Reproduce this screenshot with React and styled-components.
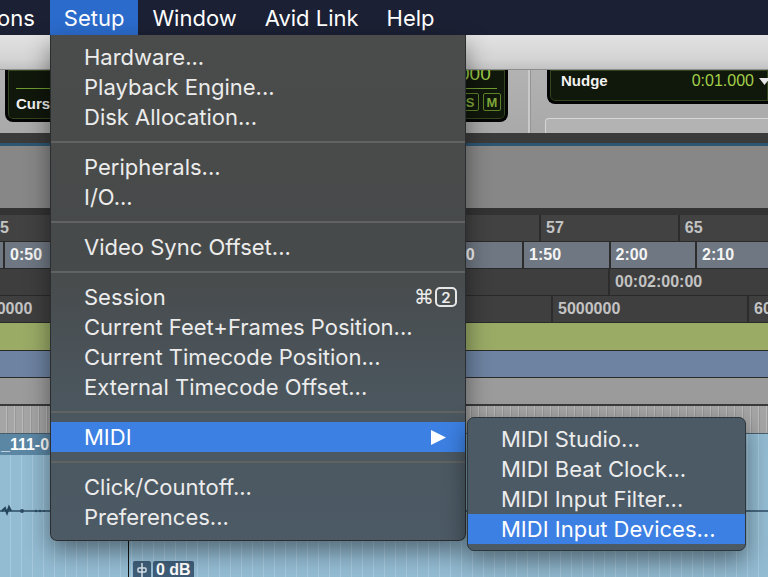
import styled, { createGlobalStyle } from "styled-components";

const GlobalStyle = createGlobalStyle`
  html, body {
    margin: 0;
    padding: 0;
    background: #94bcd3;
  }
  body {
    width: 768px;
    height: 577px;
    overflow: hidden;
    font-family: Inter, "DejaVu Sans", sans-serif;
  }
`;

const Screen = styled.div`
  position: relative;
  width: 768px;
  height: 577px;
  overflow: hidden;
  display: flex;
  flex-direction: column;
`;

/* ---------- system menu bar ---------- */

const MenuBar = styled.div`
  height: 35px;
  flex: none;
  display: flex;
  background: #1b2034;
  color: #fff;
  font-size: 22px;
`;

const BarItem = styled.div`
  display: flex;
  align-items: center;
  padding: ${(p) => (p.$cut ? "0 15px 0 0" : "0 14px")};
  margin-left: ${(p) => (p.$cut ? "-3px" : "0")};
  background: ${(p) => (p.$active ? "#2b6bcc" : "transparent")};
`;

/* ---------- pro tools window behind ---------- */

const Toolbar = styled.div`
  height: 35px;
  flex: none;
  box-sizing: border-box;
  background: linear-gradient(#e2e2e2, #d4d4d4 70%, #c2c2c2);
  border-bottom: 1px solid #8c8c8c;
`;

const CounterArea = styled.div`
  height: 63px;
  flex: none;
  display: flex;
  align-items: flex-start;
  background: linear-gradient(#b2b2b2, #a9a9a9);
  font-family: "Liberation Sans", Arial, sans-serif;
`;

const Lcd = styled.div`
  box-sizing: border-box;
  flex: none;
  height: ${(p) => p.$h}px;
  margin-left: ${(p) => p.$ml}px;
  width: ${(p) => (p.$w ? `${p.$w}px` : "auto")};
  background: #10170b;
  border: 3px solid #050505;
  border-top: none;
  border-right: ${(p) => (p.$open ? "none" : "3px solid #050505")};
  border-radius: ${(p) => (p.$open ? "0 0 0 8px" : "0 0 8px 8px")};
  box-shadow: inset 0 0 0 1px #34461f;
  overflow: hidden;
  display: flex;
  justify-content: space-between;
  align-items: ${(p) => (p.$open ? "flex-start" : "stretch")};
  padding: ${(p) => (p.$open ? "2px 0 0 11px" : "0 8px")};
`;

const LcdBlock = styled.div`
  width: ${(p) => p.$w}px;
  display: flex;
  flex-direction: column;
  align-items: ${(p) => (p.$end ? "flex-end" : "flex-start")};
`;

const LcdDigits = styled.div`
  height: 12px;
  margin-top: -2px;
  color: #9cc848;
  font-size: 19px;
  line-height: 12px;
  overflow: hidden;
  align-self: flex-start;
`;

const LcdRule = styled.div`
  height: 1px;
  width: 34px;
  margin-top: ${(p) => p.$mt}px;
  background: #6f9a2e;
`;

const LcdLabel = styled.div`
  margin-top: ${(p) => p.$mt ?? 6}px;
  color: #f2f2f2;
  font-size: 15px;
  font-weight: 700;
`;

const LcdButtons = styled.div`
  display: flex;
  gap: 4px;
  margin-top: 4px;
  margin-right: -4px;
`;

const LcdButton = styled.div`
  width: 18px;
  height: 18px;
  box-sizing: border-box;
  border: 1.5px solid #5e8228;
  border-radius: 2px;
  color: #7fa63a;
  font-size: 13px;
  font-weight: 700;
  display: flex;
  align-items: center;
  justify-content: center;
`;

const PanelDivider = styled.div`
  width: 2px;
  height: 63px;
  margin-left: 20px;
  background: #c9c9c9;
  box-shadow: 1px 0 0 #959595;
`;

const NudgeColumn = styled.div`
  flex: 1;
  margin-left: 17px;
  display: flex;
  flex-direction: column;
`;

const NudgeValue = styled.div`
  display: flex;
  align-items: center;
  gap: 5px;
  color: #a3cf4a;
  font-size: 16px;
  margin-right: -2px;
`;

const RaisedPanel = styled.div`
  height: 15px;
  margin: 14px 0 0 -2px;
  box-sizing: border-box;
  background: #b3b3b3;
  border: 1px solid #d6d6d6;
  border-right: none;
  border-bottom: none;
  border-radius: 4px 0 0 0;
`;

const Band = styled.div`
  height: ${(p) => p.$h}px;
  flex: none;
  background: ${(p) => p.$bg};
  border-bottom: ${(p) => (p.$line ? `${p.$line}px solid #2a2a2a` : "none")};
`;

const RulerRow = styled.div`
  height: 27px;
  flex: none;
  box-sizing: border-box;
  display: flex;
  overflow: hidden;
  background: ${(p) => p.$bg};
  border-bottom: 1px solid #2a2a2a;
  font-family: "Liberation Sans", Arial, sans-serif;
  font-size: 16px;
  font-weight: 700;
  color: ${(p) => p.$color || "#c3c3c3"};
`;

const RulerCell = styled.div`
  flex: none;
  box-sizing: border-box;
  display: flex;
  align-items: center;
  padding-left: 5px;
  border-left: ${(p) => (p.$plain ? "none" : "2px solid #2c2c2c")};
  white-space: nowrap;
`;

const TickStrip = styled.div`
  height: 30px;
  flex: none;
  box-sizing: border-box;
  border-top: 2px solid #3a3a3a;
  border-bottom: 1px solid #4a5d6a;
  background: repeating-linear-gradient(
    90deg,
    #a5a5a5 0 6px,
    #bababa 6px 7px,
    #989898 7px 8px
  );
`;

const TrackArea = styled.div`
  position: relative;
  flex: 1;
  display: flex;
  flex-direction: column;
  background: repeating-linear-gradient(
    90deg,
    #93bbd2 0 10px,
    #a5c8dc 10px 11px
  );
`;

const ClipName = styled.div`
  width: 150px;
  height: 21px;
  flex: none;
  display: flex;
  align-items: center;
  padding-left: 1px;
  background: #5b87a5;
  color: #fff;
  font-family: "Liberation Sans", Arial, sans-serif;
  font-size: 16px;
  font-weight: 700;
`;

const Wave = styled.svg`
  display: block;
  flex: none;
`;

const ClipEdge = styled.div`
  position: absolute;
  left: 128px;
  top: 21px;
  bottom: 0;
  width: 1px;
  background: #141414;
`;

const GainBadge = styled.div`
  position: absolute;
  left: 133px;
  bottom: -2px;
  display: flex;
  gap: 2px;
  font-family: "Liberation Sans", Arial, sans-serif;
  font-size: 16px;
  font-weight: 700;
  color: #fff;
`;

const BadgeBox = styled.div`
  height: 18px;
  display: flex;
  align-items: center;
  justify-content: center;
  padding: 0 ${(p) => p.$pad}px;
  background: #3f5d78;
  border-radius: 2px;
`;

/* ---------- drop down menus ---------- */

const DropMenu = styled.div`
  position: absolute;
  left: 50px;
  top: 35px;
  width: 416px;
  box-sizing: border-box;
  padding: 7px 0 8px;
  background: linear-gradient(
    180deg,
    #4a4c4b 0%,
    #474a4a 45%,
    #4a5257 62%,
    #4b5861 78%,
    #4c5a65 100%
  );
  border: 1px solid #2b2e30;
  border-top: none;
  border-radius: 0 0 7px 7px;
  box-shadow: 0 10px 24px rgba(0, 0, 0, 0.45);
  color: #ececec;
  font-size: 22px;
`;

const SubMenu = styled(DropMenu)`
  left: 467px;
  top: 417px;
  width: 279px;
  padding: 6px 0 6px;
  background: #4b5a65;
  border: 1px solid #2c363d;
  border-radius: 7px;
`;

const Item = styled.div`
  height: 30px;
  display: flex;
  align-items: center;
  justify-content: space-between;
  padding: 0 ${(p) => p.$pr || 9}px 0 33px;
  background: ${(p) => (p.$hl ? "#3c80e3" : "transparent")};
  color: ${(p) => (p.$hl ? "#fff" : "inherit")};
  white-space: nowrap;
`;

const Separator = styled.div`
  height: 20px;
  display: flex;
  align-items: center;
  &::after {
    content: "";
    flex: 1;
    height: 2px;
    background: #606362;
  }
`;

const Shortcut = styled.span`
  display: flex;
  align-items: center;
  gap: 1px;
  font-family: "DejaVu Sans", sans-serif;
  font-size: 20px;
`;

const KeyBox = styled.span`
  width: 22px;
  height: 20px;
  box-sizing: border-box;
  border: 2px solid #e6e6e6;
  border-radius: 5px;
  display: flex;
  align-items: center;
  justify-content: center;
  font-family: Inter, sans-serif;
  font-size: 15px;
  font-weight: 600;
`;

const setupMenu = [
  ["Hardware..."],
  ["Playback Engine..."],
  ["Disk Allocation..."],
  null,
  ["Peripherals..."],
  ["I/O..."],
  null,
  ["Video Sync Offset..."],
  null,
  ["Session", "shortcut"],
  ["Current Feet+Frames Position..."],
  ["Current Timecode Position..."],
  ["External Timecode Offset..."],
  null,
  ["MIDI", "sub"],
  null,
  ["Click/Countoff..."],
  ["Preferences..."],
];

const midiMenu = [
  "MIDI Studio...",
  "MIDI Beat Clock...",
  "MIDI Input Filter...",
  "MIDI Input Devices...",
];

const bars = ["25", "33", "41", "49", "57", "65"];
const minSecs = ["0:40", "0:50", "1:00", "1:10", "1:20", "1:30", "1:40", "1:50", "2:00", "2:10"];
const samples = ["2000000", "3000000", "4000000", "5000000", "6000000"];

function Ruler({ start, width, labels, ...rest }) {
  return (
    <RulerRow {...rest}>
      {labels.map((label, i) => (
        <RulerCell
          key={label}
          style={{ width, marginLeft: i === 0 ? start : 0 }}
        >
          {label}
        </RulerCell>
      ))}
    </RulerRow>
  );
}

function App() {
  return (
    <>
      <GlobalStyle />
      <Screen>
        <MenuBar>
          <BarItem $cut>ons</BarItem>
          <BarItem $active>Setup</BarItem>
          <BarItem>Window</BarItem>
          <BarItem>Avid Link</BarItem>
          <BarItem>Help</BarItem>
        </MenuBar>

        <Toolbar />

        <CounterArea>
          <Lcd $ml={5} $w={503} $h={52}>
            <LcdBlock $w={40}>
              <LcdDigits />
              <LcdRule $mt={8} />
              <LcdLabel>Curs</LcdLabel>
            </LcdBlock>
            <LcdBlock $w={38} $end>
              <LcdDigits>000</LcdDigits>
              <LcdRule $mt={8} />
              <LcdButtons>
                <LcdButton>S</LcdButton>
                <LcdButton>M</LcdButton>
              </LcdButtons>
            </LcdBlock>
          </Lcd>
          <PanelDivider />
          <NudgeColumn>
            <Lcd $ml={0} $h={34} $open>
              <LcdLabel $mt={0}>Nudge</LcdLabel>
              <NudgeValue>
                0:01.000
                <svg width="11" height="7" viewBox="0 0 11 7">
                  <polygon points="0,0 11,0 5.5,7" fill="#e8e8e8" />
                </svg>
              </NudgeValue>
            </Lcd>
            <RaisedPanel />
          </NudgeColumn>
        </CounterArea>

        <Band $h={10} $bg="#3b3b3b" />
        <Band $h={3} $bg="#2d5673" />
        <Band $h={62} $bg="#878787" />
        <Band $h={7} $bg="#333333" />

        <Ruler $bg="#424242" start={-16} width={138.75} labels={bars} />
        <Ruler
          $bg="#6e7782"
          $color="#f4f4f4"
          start={-83.5}
          width={86.5}
          labels={minSecs}
        />
        <RulerRow $bg="#3e3e3e">
          <RulerCell $plain style={{ width: 608 }} />
          <RulerCell style={{ width: 173 }}>00:02:00:00</RulerCell>
        </RulerRow>
        <Ruler $bg="#3f3f3f" start={-37} width={196} labels={samples} />
        <Band $h={27} $bg="#9aab66" $line={1} />
        <Band $h={26} $bg="#6d83a1" $line={1} />
        <Band $h={26} $bg="#9b9b9b" />
        <TickStrip />

        <TrackArea>
          <ClipName>_111-0</ClipName>
          <Wave width="768" height="110" viewBox="0 0 768 110">
            <line x1="0" y1="56" x2="768" y2="56" stroke="#2c4c63" strokeWidth="1.5" />
            <path d="M2 56 L5 53 L7 58 L9 52 L11 56" stroke="#23445a" strokeWidth="2" fill="none" />
            <circle cx="22" cy="56" r="2" fill="#2c4c63" />
            <circle cx="36" cy="56" r="1.2" fill="#2c4c63" />
            <circle cx="40" cy="56" r="1.2" fill="#2c4c63" />
            <circle cx="44" cy="56" r="1" fill="#2c4c63" />
          </Wave>
          <ClipEdge />
          <GainBadge>
            <BadgeBox $pad={4}>
              <svg width="10" height="14" viewBox="0 0 10 14">
                <line x1="5" y1="0" x2="5" y2="14" stroke="#d8e2ea" strokeWidth="1.5" />
                <rect x="1" y="5" width="8" height="4" rx="1" fill="none" stroke="#d8e2ea" strokeWidth="1.5" />
              </svg>
            </BadgeBox>
            <BadgeBox $pad={3}>0 dB</BadgeBox>
          </GainBadge>
        </TrackArea>

        <DropMenu>
          {setupMenu.map((entry, i) =>
            entry === null ? (
              <Separator key={i} />
            ) : (
              <Item
                key={i}
                $hl={entry[1] === "sub"}
                $pr={entry[1] === "sub" ? 19 : 8}
              >
                {entry[0]}
                {entry[1] === "shortcut" && (
                  <Shortcut>
                    ⌘<KeyBox>2</KeyBox>
                  </Shortcut>
                )}
                {entry[1] === "sub" && (
                  <svg width="15" height="15" viewBox="0 0 15 15">
                    <polygon points="0,0 15,7.5 0,15" fill="#fff" />
                  </svg>
                )}
              </Item>
            )
          )}
        </DropMenu>

        <SubMenu>
          {midiMenu.map((label, i) => (
            <Item key={label} $hl={i === midiMenu.length - 1}>
              {label}
            </Item>
          ))}
        </SubMenu>
      </Screen>
    </>
  );
}

export default App;
